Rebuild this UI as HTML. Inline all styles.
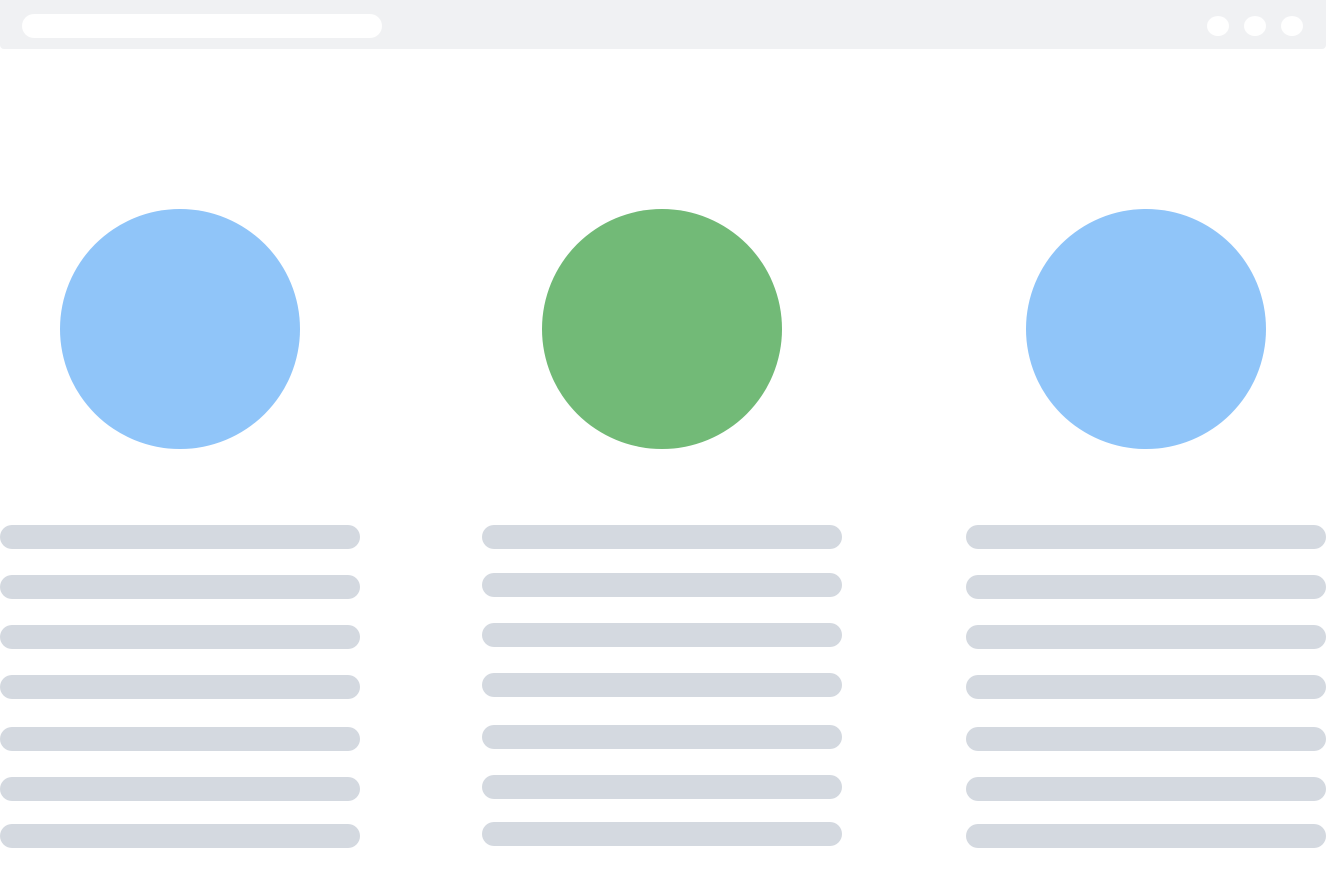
<!DOCTYPE html>
<html><head><meta charset="utf-8"><style>
html,body{margin:0;padding:0;background:#fff;width:1326px;height:884px;overflow:hidden;position:relative}
div{position:absolute}
.hdr{left:0;top:0;width:1326px;height:49px;background:#f0f1f3;border-radius:0 0 4px 4px}
.url{left:22px;top:14px;width:360px;height:24px;background:#fff;border-radius:12px}
.dot{top:16px;width:22px;height:20px;background:#fff;border-radius:50%}
.c{top:209px;width:240px;height:240px;border-radius:50%}
.b{width:360px;height:24px;background:#d4d9e0;border-radius:12px}
</style></head><body>
<div class="hdr"></div>
<div class="url"></div>
<div class="dot" style="left:1207px"></div>
<div class="dot" style="left:1244px"></div>
<div class="dot" style="left:1281px"></div>
<div class="c" style="left:60px;background:#90c5f9"></div>
<div class="c" style="left:542px;background:#72ba77"></div>
<div class="c" style="left:1026px;background:#90c5f9"></div>

<div class="b" style="left:0;top:525px"></div>
<div class="b" style="left:0;top:575px"></div>
<div class="b" style="left:0;top:625px"></div>
<div class="b" style="left:0;top:675px"></div>
<div class="b" style="left:0;top:727px"></div>
<div class="b" style="left:0;top:777px"></div>
<div class="b" style="left:0;top:824px"></div>

<div class="b" style="left:482px;top:525px"></div>
<div class="b" style="left:482px;top:573px"></div>
<div class="b" style="left:482px;top:623px"></div>
<div class="b" style="left:482px;top:673px"></div>
<div class="b" style="left:482px;top:725px"></div>
<div class="b" style="left:482px;top:775px"></div>
<div class="b" style="left:482px;top:822px"></div>

<div class="b" style="left:966px;top:525px"></div>
<div class="b" style="left:966px;top:575px"></div>
<div class="b" style="left:966px;top:625px"></div>
<div class="b" style="left:966px;top:675px"></div>
<div class="b" style="left:966px;top:727px"></div>
<div class="b" style="left:966px;top:777px"></div>
<div class="b" style="left:966px;top:824px"></div>
</body></html>
